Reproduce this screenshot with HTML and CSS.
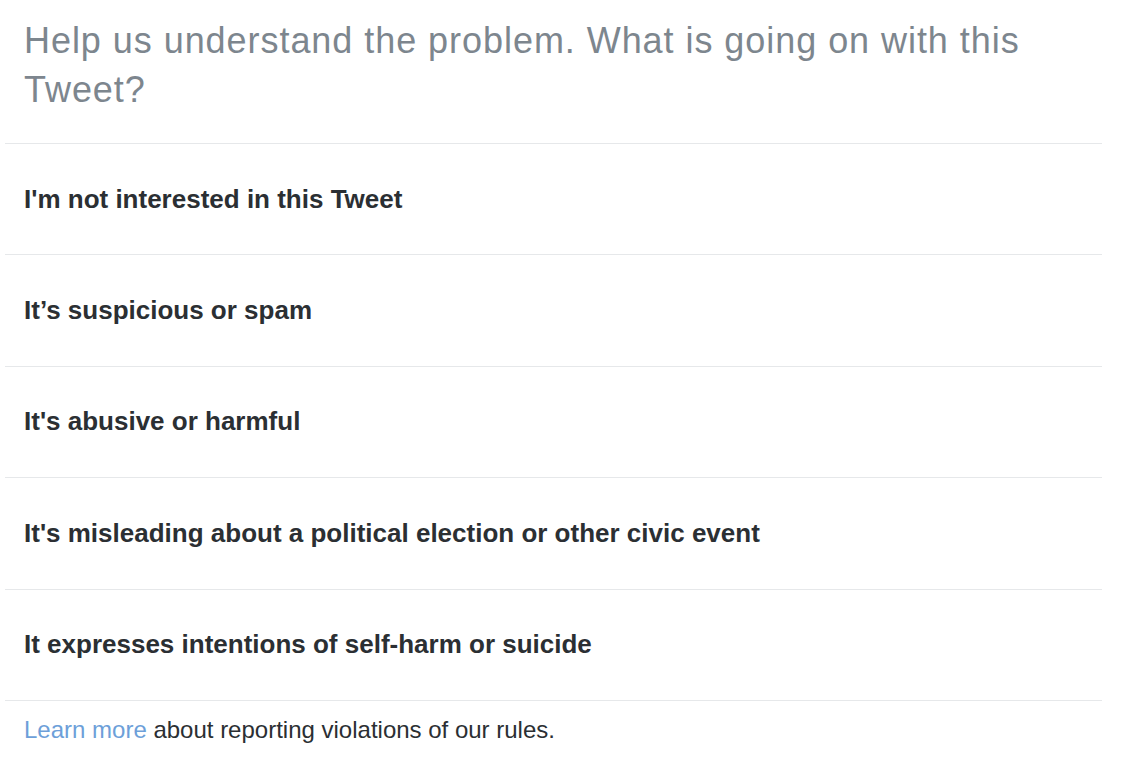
FILE: index.html
```html
<!DOCTYPE html>
<html lang="en">
<head>
<meta charset="utf-8">
<title>Report Tweet</title>
<link rel="stylesheet" href="styles.css">
</head>
<body>
<div class="report">
  <h1 class="report-title">Help us understand the problem. What is going on with this Tweet?</h1>
  <ul class="options">
    <li class="option">I'm not interested in this Tweet</li>
    <li class="option">It’s suspicious or spam</li>
    <li class="option">It's abusive or harmful</li>
    <li class="option">It's misleading about a political election or other civic event</li>
    <li class="option">It expresses intentions of self-harm or suicide</li>
  </ul>
  <p class="footer"><a class="link" href="#">Learn more</a> about reporting violations of our rules.</p>
</div>
</body>
</html>
```

FILE: styles.css
```css
html, body {
  margin: 0;
  padding: 0;
  background: #ffffff;
}

body {
  font-family: "Liberation Sans", Arial, Helvetica, sans-serif;
}

.report {
  width: 1097px;
  margin-left: 5px;
  padding-top: 16px;
}

.report-title {
  margin: 0 0 29px 0;
  padding: 0 40px 0 19px;
  font-size: 36px;
  line-height: 49px;
  letter-spacing: 0.95px;
  font-weight: normal;
  color: #7d868e;
}

.options {
  list-style: none;
  margin: 0;
  padding: 0;
  border-top: 1px solid #e6e8ea;
}

.option {
  display: flex;
  align-items: center;
  height: 110.4px;
  padding-left: 19px;
  border-bottom: 1px solid #e6e8ea;
  font-size: 26px;
  font-weight: bold;
  color: #2b2f33;
}

.footer {
  margin: 0;
  padding: 15px 0 0 19px;
  font-size: 24px;
  line-height: 28px;
  color: #2b2f33;
}

.link {
  color: #6d9fd9;
  text-decoration: none;
}
```
